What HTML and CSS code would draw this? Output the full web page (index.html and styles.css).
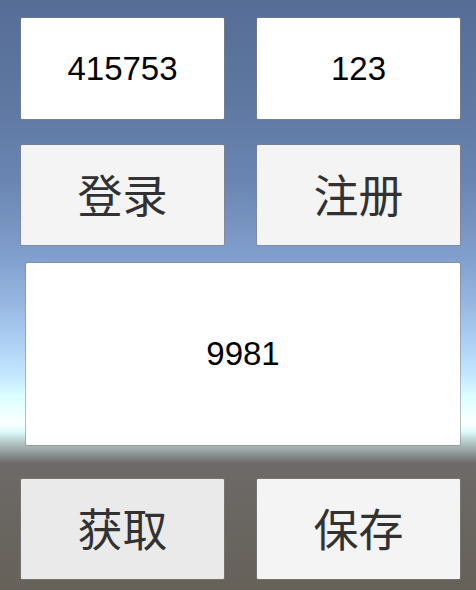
FILE: index.html
```
<!DOCTYPE html>
<html lang="zh-CN">
<head>
<meta charset="utf-8">
<meta name="viewport" content="width=device-width, initial-scale=1">
<title>登录</title>
<link rel="stylesheet" href="styles.css">
</head>
<body>
<form class="panel">
  <div class="row">
    <input class="box field" type="text" aria-label="账号" value="415753">
    <input class="box field" type="text" aria-label="密码" value="123">
  </div>
  <div class="row account-actions">
    <button class="box action" type="button">登录</button>
    <button class="box action" type="button">注册</button>
  </div>
  <input class="box field data" type="text" aria-label="数据" value="9981">
  <div class="row">
    <button class="box action active" type="button">获取</button>
    <button class="box action" type="button">保存</button>
  </div>
</form>
</body>
</html>
```
FILE: styles.css
```
* {
  box-sizing: border-box;
}

body {
  margin: 0;
  min-height: 100vh;
  background: linear-gradient(
    #566d96 0,
    #5e78a2 100px,
    #6a85b2 180px,
    #82a0ce 260px,
    #98b8e2 305px,
    #aed1f5 345px,
    #c4e7ff 375px,
    #dcffff 397px,
    #f5ffff 418px,
    #f8ffff 424px,
    #dcfafa 432px,
    #b2c5c4 443px,
    #8c9594 454px,
    #6e6a69 463px,
    #696560 520px,
    #66625a 590px
  );
}

.panel {
  display: flex;
  flex-direction: column;
  padding: 17px 15px 10px 20px;
}

.row {
  display: grid;
  grid-template-columns: 1fr 1fr;
  gap: 31px;
}

.account-actions {
  margin-top: 24px;
}

.box {
  width: 100%;
  min-width: 0;
  height: 103px;
  margin: 0;
  padding: 0;
  border: 1px solid rgba(130, 130, 130, 0.5);
  border-radius: 2px;
  background-clip: padding-box;
  text-align: center;
}

.field {
  background-color: #fff;
  color: #000;
  font: 33px "Liberation Sans", Arial, sans-serif;
}

.data {
  width: auto;
  height: 184px;
  margin: 16px 0 32px 5px;
}

.action {
  height: 102px;
  padding-bottom: 4px;
  background-color: #f4f4f4;
  color: #323232;
  font: 45px "Noto Sans CJK SC", sans-serif;
}

.active {
  background-color: #eaeaea;
}
```
